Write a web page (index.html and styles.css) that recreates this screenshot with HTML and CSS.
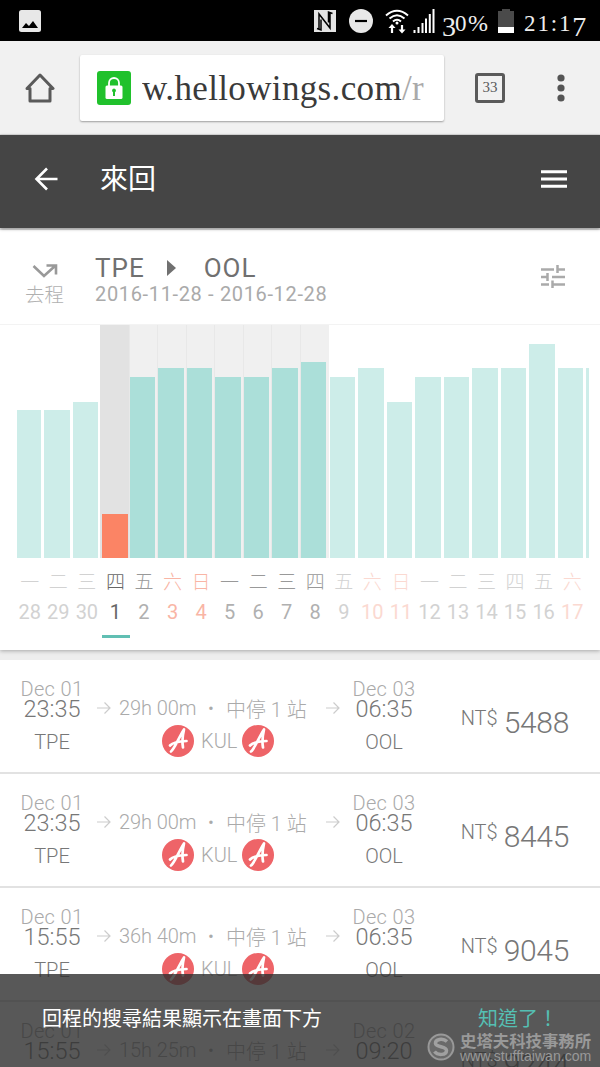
FILE: index.html
```html
<!DOCTYPE html>
<html lang="zh-Hant">

<head>
  <meta charset="UTF-8">
  <meta name="viewport" content="width=device-width, initial-scale=1.0">
  <title>來回</title>
  <link rel="stylesheet" href="styles.css">
</head>

<body>
  <!-- Shared icons -->
  <svg class="sprite">
    <symbol id="arrow" viewBox="0 0 14 14">
      <path d="M0 7h13M7.500 1.500L13 7l-5.500 5.500" fill="none" stroke="currentColor" stroke-width="1.200" />
    </symbol>
    <symbol id="airline" viewBox="0 0 32 32">
      <circle cx="16" cy="16" r="16" fill="#ee6468" />
      <path d="M9 26.500C12.500 24 16.500 13 22 4.500C20.500 11 20 17 21 22.500M8 20.500C10.500 17.800 16 16.300 24.500 16" fill="none" stroke="#fff" stroke-width="2.700" stroke-linecap="round" stroke-linejoin="round" />
    </symbol>
  </svg>

  <!-- Phone status bar -->
  <div class="status-bar">
    <svg class="photo-icon" width="22" height="22" viewBox="0 0 22 22">
      <rect width="22" height="22" rx="2.500" fill="#e8e8e8" />
      <path d="M3 18l4-5 3 3 4-5 5 7z" fill="#000" />
    </svg>
    <svg width="22" height="22" viewBox="0 0 22 22">
      <path d="M0 0h22v22H0z" fill="#e4e4e4" />
      <path d="M5 19.500V4L16 18V2.500M3 18.500L7 20V9.500M18.500 3.500L14.500 2v10.500" fill="none" stroke="#000" stroke-width="1.500" />
    </svg>
    <svg class="dnd-icon" width="24" height="24" viewBox="0 0 24 24">
      <circle cx="12" cy="12" r="12" fill="#e8e8e8" />
      <path d="M6 12h12" stroke="#000" stroke-width="2.200" />
    </svg>
    <svg class="wifi-icon" width="24" height="25" viewBox="0 0 24 25">
      <path d="M1 6.500Q12-3 23 6.500M4.500 9.500Q12 3 19.500 9.500M8 12.500Q12 9 16 12.500" fill="none" stroke="#fff" stroke-width="2" />
      <circle cx="12" cy="14" r="1.500" fill="#fff" />
      <path d="M7 24v-7M17 16v7" stroke="#fff" stroke-width="2.200" />
      <path d="M3.500 19L7 15l3.500 4zM13.500 20.500L17 24.500l3.500-4z" fill="#fff" />
    </svg>
    <svg class="signal-icon" width="22" height="24" viewBox="0 0 22 24">
      <path d="M1.500 24v-3M5.500 24v-6M9.500 24v-10M13 24V9.500M16.800 24V5M20.500 24V0" stroke="#fff" stroke-width="2" />
    </svg>
    <span class="battery-text"><span class="low">3</span>0<span class="percent">%</span></span>
    <svg class="battery-icon" width="16" height="24" viewBox="0 0 16 24">
      <path d="M0 2h4V0h8v2h4v22H0z" fill="#4a4a4a" />
      <path d="M0 18h16v6H0z" fill="#fff" />
    </svg>
    <span class="clock">21:1<span class="low">7</span></span>
  </div>

  <!-- Browser toolbar -->
  <div class="browser-bar">
    <svg class="home-icon" width="30" height="30" viewBox="0 0 30 30">
      <path d="M2 15.500L15 2l13 13.500h-3V28H5V15.500z" fill="none" stroke="#5a5a5a" stroke-width="3" stroke-linejoin="round" />
    </svg>
    <div class="url-box">
      <svg class="lock-icon" width="34" height="34" viewBox="0 0 34 34">
        <rect width="34" height="34" rx="3" fill="#20c12c" />
        <path d="M12 16v-4a5 5 0 0 1 10 0v4" fill="none" stroke="#fff" stroke-width="1.800" />
        <rect x="8.500" y="14.500" width="17" height="13.500" rx="1.500" fill="#fff" />
        <path d="M17 17.500a2 2 0 0 1 1 3.700V25h-2v-3.800a2 2 0 0 1 1-3.700z" fill="#20c12c" />
      </svg>
      <div class="url">w.hellowings.com<span class="url-path">/r</span></div>
    </div>
    <div class="tab-count">33</div>
    <svg class="dots-icon" width="8" height="28" viewBox="0 0 8 28">
      <g fill="#555">
        <circle cx="4" cy="4" r="3.600" />
        <circle cx="4" cy="14" r="3.600" />
        <circle cx="4" cy="24" r="3.600" />
      </g>
    </svg>
  </div>

  <header>
    <svg width="24" height="24" viewBox="0 0 24 24">
      <path d="M23.500 12H3M13 1.500L2.500 12 13 22.500" fill="none" stroke="#fff" stroke-width="2.600" />
    </svg>
    <h1>來回</h1>
    <svg width="26" height="18" viewBox="0 0 26 18">
      <path d="M0 1.700h26M0 9h26M0 16.300h26" stroke="#fff" stroke-width="2.900" />
    </svg>
  </header>

  <!-- Route and price chart -->
  <section class="search-card">
    <div class="route">
      <div class="direction">
        <svg width="26" height="14" viewBox="0 0 26 14">
          <path d="M1.500 2L12 12 23 2M14.500 1.500h9.500v9" fill="none" stroke="#999" stroke-width="2.600" />
        </svg>
        <span>去程</span>
      </div>
      <div class="route-text">
        <div class="airports">TPE<svg width="9" height="16" viewBox="0 0 9 16"><path d="M0 0l9 8-9 8z" fill="#707070" /></svg>OOL</div>
        <div class="dates">2016-11-28 - 2016-12-28</div>
      </div>
      <svg class="tune-icon" width="24" height="23" viewBox="0 0 24 23">
        <path d="M0 4.500h13M16.500 0v8M16.500 4.500H24M0 12h6.500M6.500 8v8M11 12h13M0 19.500h8M11.500 15.500v8M11.500 19.500H24" fill="none" stroke="#aaa" stroke-width="2.500" />
      </svg>
    </div>
    <div class="chart">
      <div class="day first"><div class="track"><div class="bar" style="height: 148px"></div></div><span>一</span><b>28</b></div>
      <div class="day"><div class="track"><div class="bar" style="height: 148px"></div></div><span>二</span><b>29</b></div>
      <div class="day"><div class="track"><div class="bar" style="height: 156px"></div></div><span>三</span><b>30</b></div>
      <div class="day near selected"><div class="track"><div class="bar" style="height: 44px"></div></div><span>四</span><b>1</b></div>
      <div class="day near"><div class="track"><div class="bar" style="height: 181px"></div></div><span>五</span><b>2</b></div>
      <div class="day near weekend"><div class="track"><div class="bar" style="height: 190px"></div></div><span>六</span><b>3</b></div>
      <div class="day near weekend"><div class="track"><div class="bar" style="height: 190px"></div></div><span>日</span><b>4</b></div>
      <div class="day near"><div class="track"><div class="bar" style="height: 181px"></div></div><span>一</span><b>5</b></div>
      <div class="day near"><div class="track"><div class="bar" style="height: 181px"></div></div><span>二</span><b>6</b></div>
      <div class="day near"><div class="track"><div class="bar" style="height: 190px"></div></div><span>三</span><b>7</b></div>
      <div class="day near"><div class="track"><div class="bar" style="height: 196px"></div></div><span>四</span><b>8</b></div>
      <div class="day"><div class="track"><div class="bar" style="height: 181px"></div></div><span>五</span><b>9</b></div>
      <div class="day weekend"><div class="track"><div class="bar" style="height: 190px"></div></div><span>六</span><b>10</b></div>
      <div class="day weekend"><div class="track"><div class="bar" style="height: 156px"></div></div><span>日</span><b>11</b></div>
      <div class="day"><div class="track"><div class="bar" style="height: 181px"></div></div><span>一</span><b>12</b></div>
      <div class="day"><div class="track"><div class="bar" style="height: 181px"></div></div><span>二</span><b>13</b></div>
      <div class="day"><div class="track"><div class="bar" style="height: 190px"></div></div><span>三</span><b>14</b></div>
      <div class="day"><div class="track"><div class="bar" style="height: 190px"></div></div><span>四</span><b>15</b></div>
      <div class="day"><div class="track"><div class="bar" style="height: 214px"></div></div><span>五</span><b>16</b></div>
      <div class="day weekend"><div class="track"><div class="bar" style="height: 190px"></div></div><span>六</span><b>17</b></div>
      <div class="day"><div class="track"><div class="bar" style="height: 190px"></div></div></div>
    </div>
  </section>

  <!-- Flight results -->
  <section class="flights">
    <div class="flight">
      <div class="stop"><small>Dec 01</small><strong>23:35</strong><span>TPE</span></div>
      <div class="trip">
        <div class="duration"><svg><use href="#arrow" /></svg><span class="time">29h 00m</span><i>•</i><span>中停 1 站</span><svg><use href="#arrow" /></svg></div>
        <div class="via"><svg><use href="#airline" /></svg>KUL<svg><use href="#airline" /></svg></div>
      </div>
      <div class="stop"><small>Dec 03</small><strong>06:35</strong><span>OOL</span></div>
      <div class="price"><span>NT$</span>5488</div>
    </div>
    <div class="flight">
      <div class="stop"><small>Dec 01</small><strong>23:35</strong><span>TPE</span></div>
      <div class="trip">
        <div class="duration"><svg><use href="#arrow" /></svg><span class="time">29h 00m</span><i>•</i><span>中停 1 站</span><svg><use href="#arrow" /></svg></div>
        <div class="via"><svg><use href="#airline" /></svg>KUL<svg><use href="#airline" /></svg></div>
      </div>
      <div class="stop"><small>Dec 03</small><strong>06:35</strong><span>OOL</span></div>
      <div class="price"><span>NT$</span>8445</div>
    </div>
    <div class="flight">
      <div class="stop"><small>Dec 01</small><strong>15:55</strong><span>TPE</span></div>
      <div class="trip">
        <div class="duration"><svg><use href="#arrow" /></svg><span class="time">36h 40m</span><i>•</i><span>中停 1 站</span><svg><use href="#arrow" /></svg></div>
        <div class="via"><svg><use href="#airline" /></svg>KUL<svg><use href="#airline" /></svg></div>
      </div>
      <div class="stop"><small>Dec 03</small><strong>06:35</strong><span>OOL</span></div>
      <div class="price"><span>NT$</span>9045</div>
    </div>
    <div class="flight">
      <div class="stop"><small>Dec 01</small><strong>15:55</strong></div>
      <div class="trip">
        <div class="duration"><svg><use href="#arrow" /></svg><span class="time">15h 25m</span><i>•</i><span>中停 1 站</span><svg><use href="#arrow" /></svg></div>
      </div>
      <div class="stop"><small>Dec 02</small><strong>09:20</strong></div>
      <div class="price"><span>NT$</span>9244</div>
    </div>
  </section>

  <!-- Message bar -->
  <div class="snackbar">
    <span>回程的搜尋結果顯示在畫面下方</span>
    <a class="dismiss">知道了！</a>
  </div>

  <div class="watermark">
    <svg width="28" height="28" viewBox="0 0 28 28">
      <circle cx="14" cy="14" r="12.500" fill="#6a6a6a" stroke="#999" stroke-width="2" />
      <path d="M20 8.500C16 5 8 6 8.500 10.500C9 14.500 19.500 13 19.500 17.500C19.500 22.500 10.500 22.500 7.500 18.500" fill="none" stroke="#a0a0a0" stroke-width="3.500" />
    </svg>
    <div>
      <div class="watermark-name">史塔夫科技事務所</div>
      <div class="watermark-url">www.stufftaiwan.com</div>
    </div>
  </div>
</body>

</html>
```
FILE: styles.css
```css
* {
  box-sizing: border-box;
}

body {
  margin: 0;
  height: 1067px;
  overflow: hidden;
  position: relative;
  background-color: #eee;
  color: #777;
  font-family: Roboto, "Noto Sans CJK TC", sans-serif;
  font-weight: 300;
}

svg {
  display: block;
  flex-shrink: 0;
}

.sprite {
  position: absolute;
  width: 0;
  height: 0;
}

/* Status bar */
.status-bar {
  display: flex;
  align-items: flex-start;
  height: 41px;
  padding: 10px 12px 0 19px;
  background-color: #000;
  color: #eee;
  font-family: "Liberation Serif", serif;
  font-weight: 400;
}

.photo-icon {
  margin-right: 273px;
}

.dnd-icon {
  margin: -1px 0 0 13px;
}

.wifi-icon {
  margin: -1px 0 0 12px;
}

.signal-icon {
  margin: -1px 7px 0 4px;
}

.battery-text,
.clock {
  height: 26px;
  font-size: 23px;
  line-height: 27px;
  white-space: nowrap;
}

.battery-text {
  width: 51px;
  letter-spacing: 1.5px;
}

.battery-text .percent {
  font-size: 24px;
}

.low {
  position: relative;
  top: 5px;
  font-size: 28px;
  line-height: 20px;
}

.battery-text .low {
  letter-spacing: -1px;
}

.battery-icon {
  margin: -1px 0 0 7px;
}

.clock {
  margin-left: 10px;
  letter-spacing: 1.8px;
}

/* Browser toolbar */
.browser-bar {
  display: flex;
  align-items: center;
  height: 94px;
  padding-left: 25px;
  background-color: #f1f1f1;
  border-bottom: 1px solid #ddd;
}

.url-box {
  display: flex;
  flex-shrink: 0;
  align-items: center;
  width: 364px;
  height: 66px;
  margin-left: 25px;
  padding-left: 17px;
  background-color: #fff;
  border-radius: 2px;
  box-shadow: 0 1px 2px rgba(0, 0, 0, 0.35);
}

.url {
  width: 285px;
  margin: 3px 0 0 11px;
  overflow: hidden;
  color: #3a3a3a;
  font-family: "Liberation Serif", serif;
  font-size: 35px;
  font-weight: 400;
  line-height: 50px;
  letter-spacing: 0.35px;
  white-space: nowrap;
}

.url-path {
  color: #aaa;
}

.tab-count {
  flex-shrink: 0;
  width: 30px;
  height: 30px;
  margin: 0 52px 0 31px;
  border: 3px solid #5a5a5a;
  border-radius: 3px;
  color: #5a5a5a;
  font-family: "Liberation Serif", serif;
  font-size: 15px;
  line-height: 23px;
  text-align: center;
}

/* App header */
header {
  display: flex;
  align-items: center;
  position: relative;
  height: 93px;
  padding: 0 33px 5px 34px;
  background-color: #454545;
  box-shadow: 0 1px 3px rgba(0, 0, 0, 0.4);
}

header h1 {
  flex: 1;
  margin: -4px 0 0 42px;
  color: #fff;
  font-size: 28px;
  font-weight: 400;
}

/* Search card */
.search-card {
  height: 420px;
  margin-top: 2px;
  background-color: #fff;
  box-shadow: 0 1px 4px rgba(0, 0, 0, 0.3);
}

.route {
  display: flex;
  align-items: flex-start;
  height: 95px;
  padding: 24px 35px 0 25px;
  border-bottom: 1px solid #f3f3f3;
  font-weight: 400;
}

.direction {
  width: 70px;
  color: #b0b0b0;
  font-size: 19.5px;
  font-weight: 300;
  line-height: 24px;
}

.direction svg {
  margin: 10px 0 6px 7px;
}

.route-text {
  flex: 1;
}

.airports {
  display: flex;
  align-items: center;
  color: #707070;
  font-size: 26px;
  line-height: 28px;
  letter-spacing: 1px;
}

.airports svg {
  margin: 0 28px 0 22px;
}

.dates {
  color: #aaa;
  font-size: 20px;
  line-height: 24px;
  letter-spacing: 0.65px;
}

.tune-icon {
  margin-top: 11px;
}

/* Price chart */
.chart {
  display: flex;
  width: 574px;
  height: 325px;
  margin-left: 14.5px;
  overflow: hidden;
}

.day {
  flex: 0 0 28.55px;
  color: #d2d2d2;
  font-size: 19px;
  text-align: center;
}

.track {
  display: flex;
  align-items: flex-end;
  height: 233px;
  margin-bottom: 11px;
  padding-left: 1px;
}

.first .track {
  padding-left: 2.5px;
}

.bar {
  width: 25.5px;
  background-color: #cdede9;
}

.first .bar {
  width: 24px;
}

.day span,
.day b {
  display: block;
  margin-right: -2px;
  font-weight: 400;
  line-height: 27px;
}

.day span {
  font-weight: 300;
}

.day b {
  font-size: 20px;
  line-height: 33px;
}

.weekend {
  color: #fbd9d1;
}

.near {
  color: #b0b0b0;
}

.near span {
  color: #999;
}

.near .track {
  background-color: #f0f0f0;
  box-shadow: inset 1px 0 #e8e8e8;
}

.near .bar {
  background-color: #abdfd9;
}

.near.weekend,
.near.weekend span {
  color: #f9b5a5;
}

.selected,
.selected span {
  color: #666;
}

.selected .track {
  padding-left: 2px;
  background-color: #e2e2e2;
  box-shadow: none;
}

.selected .bar {
  background-color: #fb8465;
}

.selected::after {
  content: "";
  display: block;
  height: 3px;
  margin: 6px -1px 0 1.5px;
  background-color: #61bfb3;
}

/* Flight list */
.flights {
  margin-top: 10px;
}

.flight {
  display: flex;
  height: 114px;
  padding: 19px 31px 0 12px;
  background-color: #fff;
  border-bottom: 2px solid #e2e2e2;
  white-space: nowrap;
}

.stop {
  display: flex;
  flex-direction: column;
  align-items: center;
  width: 80px;
}

.stop small {
  color: #aaa;
  font-size: 20px;
  line-height: 20px;
  letter-spacing: 0.4px;
}

.stop strong {
  font-size: 23.5px;
  font-weight: 300;
  line-height: 21px;
}

.stop span {
  margin-top: 9px;
  font-size: 20px;
  line-height: 26px;
}

.trip {
  width: 252px;
  padding: 17px 0 0 5px;
  color: #aaa;
  font-size: 20px;
}

.duration {
  display: flex;
  align-items: center;
  height: 24px;
}

.duration svg {
  width: 14px;
  height: 14px;
  color: #ccc;
}

.duration .time {
  width: 79px;
  margin-left: 8px;
  letter-spacing: -0.1px;
}

.duration i {
  width: 26px;
  margin-right: 2px;
  font-size: 18px;
  font-style: normal;
  text-align: center;
}

.duration svg:last-child {
  margin-left: auto;
  margin-right: 4px;
}

.via {
  display: flex;
  align-items: center;
  gap: 7px;
  margin: 5px 0 0 65px;
}

.via svg {
  width: 32px;
  height: 32px;
}

.via svg:last-child {
  margin-left: -2px;
}

.price {
  display: flex;
  flex: 1;
  justify-content: flex-end;
  padding-top: 27px;
  font-size: 30px;
  line-height: 34px;
  letter-spacing: -0.3px;
}

.price span {
  margin-right: 6px;
  font-size: 20px;
  line-height: 25px;
  letter-spacing: 0;
}

/* Message bar over the list */
.snackbar {
  display: flex;
  justify-content: space-between;
  position: absolute;
  left: 0;
  right: 0;
  bottom: 0;
  height: 93px;
  padding: 30px 42px 0 42px;
  background-color: rgba(46, 46, 46, 0.8);
  color: #fff;
  font-size: 20px;
  font-weight: 400;
  line-height: 30px;
}

.dismiss {
  color: #55bfb3;
}

.watermark {
  display: flex;
  gap: 5px;
  position: absolute;
  left: 427px;
  top: 1033px;
  color: #999;
  font-weight: 700;
}

.watermark-name {
  font-size: 16.4px;
  line-height: 18px;
}

.watermark-url {
  font-family: "Liberation Sans", sans-serif;
  font-size: 14.1px;
  font-weight: 400;
  line-height: 11px;
}
```
